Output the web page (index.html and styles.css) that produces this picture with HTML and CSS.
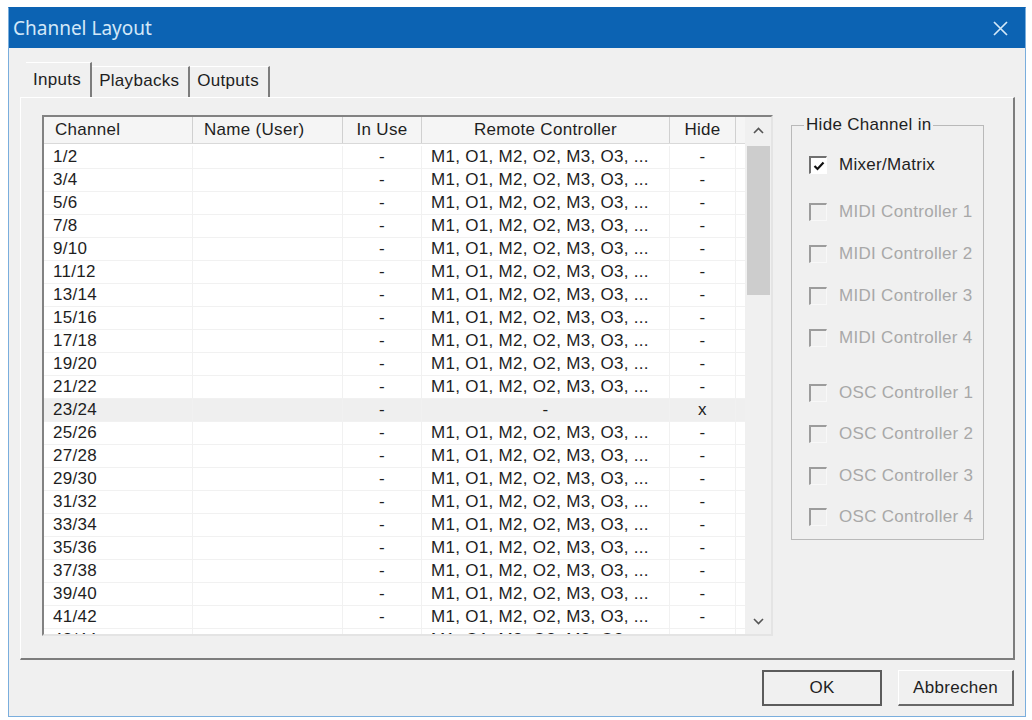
FILE: index.html
```html
<!DOCTYPE html>
<html lang="de">
<head>
    <meta charset="UTF-8">
    <title>Channel Layout</title>
    <link rel="stylesheet" href="styles.css">
</head>
<body>
    <div class="dialog">
        <div class="titlebar">
            <span class="title">Channel Layout</span>
            <svg class="close" width="15" height="15" viewBox="0 0 15 15"><path d="M1 1L14 14M14 1L1 14" stroke="#d3e8f8" stroke-width="1.7" fill="none"/></svg>
        </div>

        <div class="content">
            <div class="tabs">
                <div class="tab active">Inputs</div>
                <div class="tab">Playbacks</div>
                <div class="tab">Outputs</div>
            </div>

            <div class="panel">
                <div class="list">
                    <div class="table">
                        <div class="head">
                            <span>Channel</span>
                            <span>Name (User)</span>
                            <span class="c">In Use</span>
                            <span class="c">Remote Controller</span>
                            <span class="c">Hide</span>
                        </div>
                        <div class="rows">
                            <div class="row"><span>1/2</span><span></span><span class="c">-</span><span>M1, O1, M2, O2, M3, O3, ...</span><span class="c">-</span></div>
                            <div class="row"><span>3/4</span><span></span><span class="c">-</span><span>M1, O1, M2, O2, M3, O3, ...</span><span class="c">-</span></div>
                            <div class="row"><span>5/6</span><span></span><span class="c">-</span><span>M1, O1, M2, O2, M3, O3, ...</span><span class="c">-</span></div>
                            <div class="row"><span>7/8</span><span></span><span class="c">-</span><span>M1, O1, M2, O2, M3, O3, ...</span><span class="c">-</span></div>
                            <div class="row"><span>9/10</span><span></span><span class="c">-</span><span>M1, O1, M2, O2, M3, O3, ...</span><span class="c">-</span></div>
                            <div class="row"><span>11/12</span><span></span><span class="c">-</span><span>M1, O1, M2, O2, M3, O3, ...</span><span class="c">-</span></div>
                            <div class="row"><span>13/14</span><span></span><span class="c">-</span><span>M1, O1, M2, O2, M3, O3, ...</span><span class="c">-</span></div>
                            <div class="row"><span>15/16</span><span></span><span class="c">-</span><span>M1, O1, M2, O2, M3, O3, ...</span><span class="c">-</span></div>
                            <div class="row"><span>17/18</span><span></span><span class="c">-</span><span>M1, O1, M2, O2, M3, O3, ...</span><span class="c">-</span></div>
                            <div class="row"><span>19/20</span><span></span><span class="c">-</span><span>M1, O1, M2, O2, M3, O3, ...</span><span class="c">-</span></div>
                            <div class="row"><span>21/22</span><span></span><span class="c">-</span><span>M1, O1, M2, O2, M3, O3, ...</span><span class="c">-</span></div>
                            <div class="row sel"><span>23/24</span><span></span><span class="c">-</span><span class="c">-</span><span class="c">x</span></div>
                            <div class="row"><span>25/26</span><span></span><span class="c">-</span><span>M1, O1, M2, O2, M3, O3, ...</span><span class="c">-</span></div>
                            <div class="row"><span>27/28</span><span></span><span class="c">-</span><span>M1, O1, M2, O2, M3, O3, ...</span><span class="c">-</span></div>
                            <div class="row"><span>29/30</span><span></span><span class="c">-</span><span>M1, O1, M2, O2, M3, O3, ...</span><span class="c">-</span></div>
                            <div class="row"><span>31/32</span><span></span><span class="c">-</span><span>M1, O1, M2, O2, M3, O3, ...</span><span class="c">-</span></div>
                            <div class="row"><span>33/34</span><span></span><span class="c">-</span><span>M1, O1, M2, O2, M3, O3, ...</span><span class="c">-</span></div>
                            <div class="row"><span>35/36</span><span></span><span class="c">-</span><span>M1, O1, M2, O2, M3, O3, ...</span><span class="c">-</span></div>
                            <div class="row"><span>37/38</span><span></span><span class="c">-</span><span>M1, O1, M2, O2, M3, O3, ...</span><span class="c">-</span></div>
                            <div class="row"><span>39/40</span><span></span><span class="c">-</span><span>M1, O1, M2, O2, M3, O3, ...</span><span class="c">-</span></div>
                            <div class="row"><span>41/42</span><span></span><span class="c">-</span><span>M1, O1, M2, O2, M3, O3, ...</span><span class="c">-</span></div>
                            <div class="row"><span>43/44</span><span></span><span class="c">-</span><span>M1, O1, M2, O2, M3, O3, ...</span><span class="c">-</span></div>
                        </div>
                    </div>
                    <div class="scrollbar">
                        <div class="sb-btn"><svg width="11" height="7" viewBox="0 0 11 7"><path d="M1 6L5.5 1.5L10 6" stroke="#555" stroke-width="1.6" fill="none"/></svg></div>
                        <div class="sb-track"><div class="thumb"></div></div>
                        <div class="sb-btn"><svg width="11" height="7" viewBox="0 0 11 7"><path d="M1 1L5.5 5.5L10 1" stroke="#555" stroke-width="1.6" fill="none"/></svg></div>
                    </div>
                </div>

                <fieldset class="group">
                    <legend>Hide Channel in</legend>
                    <div class="opt first"><span class="box checked"><svg width="14" height="14" viewBox="0 0 14 14"><path d="M2.5 7L5.5 10L11.5 3.5" stroke="#111" stroke-width="2.2" fill="none"/></svg></span>Mixer/Matrix</div>
                    <div class="opt off midi1"><span class="box"></span>MIDI Controller 1</div>
                    <div class="opt off"><span class="box"></span>MIDI Controller 2</div>
                    <div class="opt off"><span class="box"></span>MIDI Controller 3</div>
                    <div class="opt off"><span class="box"></span>MIDI Controller 4</div>
                    <div class="opt off osc osc1"><span class="box"></span>OSC Controller 1</div>
                    <div class="opt off osc"><span class="box"></span>OSC Controller 2</div>
                    <div class="opt off osc"><span class="box"></span>OSC Controller 3</div>
                    <div class="opt off osc"><span class="box"></span>OSC Controller 4</div>
                </fieldset>
            </div>

            <div class="buttons">
                <button class="btn default">OK</button>
                <button class="btn">Abbrechen</button>
            </div>
        </div>
    </div>
</body>
</html>
```

FILE: styles.css
```css
* {
    box-sizing: border-box;
}
body {
    margin: 0;
    background: #fff;
    font-family: "Liberation Sans", Arial, sans-serif;
    font-size: 17px;
    letter-spacing: 0.3px;
    color: #1e1e1e;
}
.dialog {
    margin: 7px 0 0 8px;
    width: 1018px;
    height: 710px;
    border: 1px solid #7aaedd;
    border-top-color: #0c63b3;
    background: #f0f0f0;
    display: flex;
    flex-direction: column;
}
.titlebar {
    flex: none;
    height: 40px;
    background: #0c63b3;
    display: flex;
    align-items: center;
    justify-content: space-between;
    padding: 0 17px 0 4px;
}
.title {
    font-family: "Noto Sans", sans-serif;
    font-size: 19px;
    letter-spacing: 0;
    color: #d3e8f8;
}
.content {
    flex: 1;
    display: flex;
    flex-direction: column;
    padding: 14px 10px 10px 11px;
}

/* tabs */
.tabs {
    display: flex;
    align-items: flex-end;
    height: 35px;
    padding-left: 6px;
}
.tab {
    height: 31px;
    padding: 0 9px 3px 7px;
    display: flex;
    align-items: center;
    border-top: 1px solid #fff;
    border-right: 2px solid #7d7d7d;
}
.tab.active {
    height: 35px;
    padding-bottom: 1px;
}
.panel {
    flex: 1;
    display: flex;
    align-items: flex-start;
    gap: 18px;
    padding: 17px 0 0 21px;
    border-top: 1px solid #fff;
    border-left: 1px solid #fff;
    border-right: 2px solid #7d7d7d;
    border-bottom: 2px solid #7d7d7d;
}

/* list view */
.list {
    width: 731px;
    height: 521px;
    display: flex;
    background: #fff;
    border-style: solid;
    border-width: 2px;
    border-color: #828282 #e4e4e4 #e4e4e4 #828282;
}
.table {
    width: 701px;
    display: flex;
    flex-direction: column;
    overflow: hidden;
}
.head, .row {
    display: grid;
    grid-template-columns: 149px 150px 79px 248px 66px;
}
.head {
    flex: none;
    height: 27px;
    background: #f5f5f5;
    border-bottom: 1px solid #d9d9d9;
}
.head span {
    line-height: 26px;
    padding-left: 11px;
    border-right: 1px solid #d0d0d0;
}
.rows {
    flex: 1;
    padding-top: 2px;
    overflow: hidden;
}
.row {
    height: 23px;
    line-height: 22px;
    border-bottom: 1px solid #f1f1f1;
}
.row span {
    padding-left: 9px;
    white-space: nowrap;
    overflow: hidden;
    border-right: 1px solid #f1f1f1;
}
.head .c, .row .c {
    padding-left: 0;
    text-align: center;
}
.row.sel {
    background: #efefef;
}
.scrollbar {
    width: 26px;
    display: flex;
    flex-direction: column;
    background: #f0f0f0;
}
.sb-btn {
    height: 26px;
    display: flex;
    align-items: center;
    justify-content: center;
}
.sb-track {
    flex: 1;
    padding: 3px 1px 0 2px;
}
.thumb {
    height: 149px;
    background: #cdcdcd;
}

/* group box */
.group {
    width: 193px;
    margin: 0;
    padding: 0 0 1px 17px;
    border: 1px solid #b9b9b9;
}
.group legend {
    margin-left: -5px;
    padding: 0 2px;
    line-height: 20px;
}
.opt {
    height: 42px;
    display: flex;
    align-items: center;
    gap: 12px;
}
.opt.first {
    margin-top: 9px;
}
.opt.midi1 {
    margin-top: 5px;
}
.opt.osc {
    height: 41.5px;
}
.opt.osc1 {
    margin-top: 13px;
}
.opt.off {
    color: #a8a8a8;
}
.box {
    width: 18px;
    height: 18px;
    display: flex;
    align-items: center;
    justify-content: center;
    background: #fff;
    border-style: solid;
    border-width: 2px 1px 1px 2px;
    border-color: #707070 #fff #fff #707070;
}
.opt.off .box {
    background: #f0f0f0;
    border-color: #9c9c9c #f8f8f8 #f8f8f8 #9c9c9c;
}

/* buttons */
.buttons {
    display: flex;
    justify-content: flex-end;
    gap: 16px;
    margin-top: 10px;
    padding-right: 1px;
}
.btn {
    height: 36px;
    width: 116px;
    font: inherit;
    letter-spacing: 0.3px;
    color: #1e1e1e;
    background: #f0f0f0;
    border-style: solid;
    border-width: 1px 2px 2px 1px;
    border-color: #fff #686868 #686868 #fff;
}
.btn.default {
    width: 120px;
    border: 2px solid #5c5c5c;
}
```
